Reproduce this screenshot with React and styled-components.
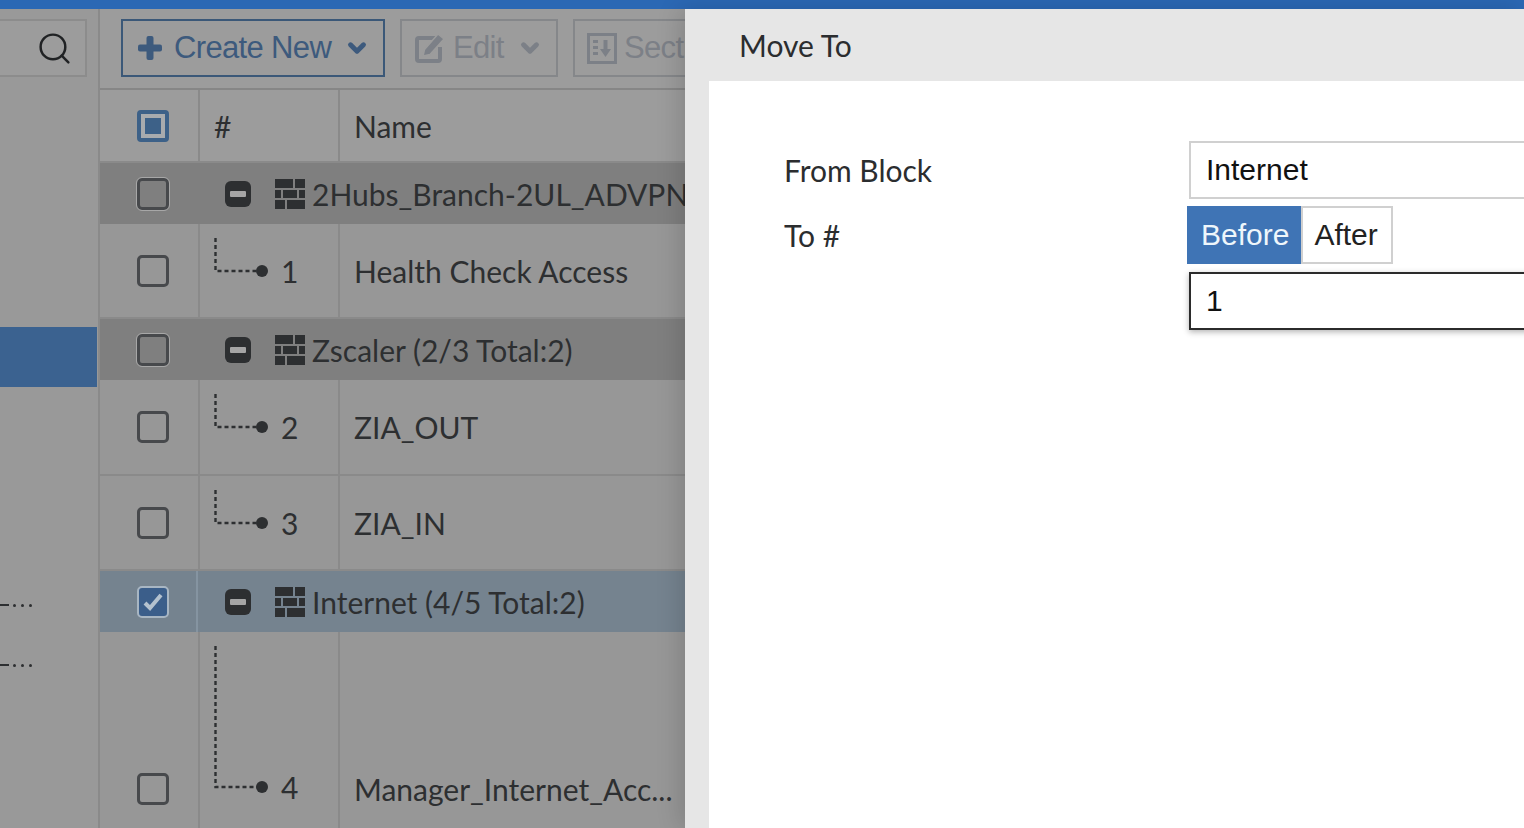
import React from "react";
import styled, { createGlobalStyle } from "styled-components";
import { ChevronDown, Search } from "lucide-react";

const rows = [
  { kind: "group", height: 61, title: "2Hubs_Branch-2UL_ADVPN" },
  { kind: "rule", height: 95, num: 1, name: "Health Check Access", line: 33 },
  { kind: "group", height: 61, title: "Zscaler (2/3 Total:2)" },
  { kind: "rule", height: 96, num: 2, name: "ZIA_OUT", line: 33 },
  { kind: "rule", height: 95, num: 3, name: "ZIA_IN", line: 33 },
  { kind: "group", height: 61, title: "Internet (4/5 Total:2)", selected: true },
  { kind: "rule", height: 316, num: 4, name: "Manager_Internet_Acc...", line: 141 },
];

export default function App() {
  return (
    <>
      <GlobalStyle />
      <Screen>
        <TopBar />
        <Body>
          <Page>
            <Sidebar>
              <SearchBox>
                <Search size={37} strokeWidth={1.6} color="#202224" />
              </SearchBox>
              <ActiveItem />
              <TruncatedItem $gap={216}><Dash /><Dot /><Dot /><Dot /></TruncatedItem>
              <TruncatedItem $gap={56}><Dash /><Dot /><Dot /><Dot /></TruncatedItem>
            </Sidebar>

            <Content>
              <Toolbar>
                <ToolButton $primary $width={264}>
                  <PlusIcon />
                  <span>Create New</span>
                  <ChevronDown size={26} strokeWidth={4.5} />
                </ToolButton>
                <ToolButton $width={158} $inset={12} $iconShift={-4}>
                  <EditIcon />
                  <span>Edit</span>
                  <ChevronDown size={26} strokeWidth={4.5} />
                </ToolButton>
                <ToolButton $width={180} $inset={12} $iconShift={-4}>
                  <SectionIcon />
                  <span>Section</span>
                </ToolButton>
              </Toolbar>

              <HeadRow $height={75}>
                <CheckCell>
                  <PartialBox><i /></PartialBox>
                </CheckCell>
                <NumHead>#</NumHead>
                <NameHead>Name</NameHead>
              </HeadRow>

              {rows.map(( row, index ) => (
                row.kind === "group"
                  ? <GroupLine key={index} row={row} />
                  : <RuleLine key={index} row={row} />
              ))}
            </Content>
          </Page>

          <Panel>
            <PanelTitle>Move To</PanelTitle>
            <PanelBody>
              <FormRow>
                <FormLabel>From Block</FormLabel>
                <SelectBox>Internet</SelectBox>
              </FormRow>
              <ToRow>
                <ToLabel>To #</ToLabel>
                <ToFields>
                  <Switcher>
                    <SwitchButton $active>Before</SwitchButton>
                    <SwitchButton>After</SwitchButton>
                  </Switcher>
                  <NumberBox>1</NumberBox>
                </ToFields>
              </ToRow>
            </PanelBody>
          </Panel>
        </Body>
      </Screen>
    </>
  );
}

const GroupLine = ( { row } ) => (
  <GroupRow $selected={row.selected} $height={row.height}>
    <CheckCell $group $selected={row.selected}>
      <CheckBox $group $checked={row.selected}>
        {row.selected && <CheckIcon />}
      </CheckBox>
    </CheckCell>
    <GroupTitle>
      <MinusIcon />
      <BrickIcon />
      <span>{row.title}</span>
    </GroupTitle>
  </GroupRow>
);

const RuleLine = ( { row } ) => (
  <RuleRow $height={row.height}>
    <CheckCell>
      <CheckBox />
    </CheckCell>
    <TreeCell>
      <Tree>
        <TreeIcon height={row.line} />
        <RuleNum>{row.num}</RuleNum>
      </Tree>
    </TreeCell>
    <NameCell>{row.name}</NameCell>
  </RuleRow>
);

const PlusIcon = () => (
  <svg width="26" height="26" viewBox="0 0 26 26" fill="currentColor">
    <rect x="9.5" y="1" width="7" height="24" rx="2" />
    <rect x="1" y="9.5" width="24" height="7" rx="2" />
  </svg>
);

const EditIcon = () => (
  <svg width="32" height="32" viewBox="0 0 32 32">
    <path d="M22 6H5a2 2 0 0 0-2 2v19a2 2 0 0 0 2 2h19a2 2 0 0 0 2-2V15" fill="none" stroke="currentColor" strokeWidth="4" />
    <path d="M9 24l1.500-6.500L24 2l6 5-14 15.500z" fill="currentColor" stroke="#9c9c9c" strokeWidth="1.500" />
  </svg>
);

const SectionIcon = () => (
  <svg width="30" height="31" viewBox="0 0 30 31" fill="currentColor">
    <path d="M0 0h30v31H0zM3 3v25h24V3z" fillRule="evenodd" />
    <path d="M6 7h5v3H6zM6 13h5v3H6zM6 19h5v3H6zM16.500 7h4v9H24l-5.500 8-5.500-8h3.500z" />
  </svg>
);

const MinusIcon = () => (
  <svg width="26" height="26" viewBox="0 0 26 26">
    <rect width="26" height="26" rx="6" fill="#2d2f31" />
    <rect x="5" y="10" width="16" height="6" rx="1" fill="#a5a5a5" />
  </svg>
);

const BrickIcon = () => (
  <svg width="30" height="30" viewBox="0 0 30 30" fill="#2d2f31">
    <path d="M0 0h18v9H0zM20 0h10v9H20zM0 11h6v8H0zM8 11h14v8H8zM24 11h6v8h-6zM0 21h10v9H0zM12 21h18v9H12z" />
  </svg>
);

const CheckIcon = () => (
  <svg width="22" height="20" viewBox="0 0 22 20" fill="none">
    <path d="M3 11l5 5L19 3" stroke="#b4c2cf" strokeWidth="4" />
  </svg>
);

// dotted elbow from the parent row down to the rule number
const TreeIcon = ( { height } ) => (
  <TreeSvg width="55" height={height + 7} viewBox={`0 0 55 ${height + 7}`}>
    <path d={`M1.500 0V${height}H44`} fill="none" stroke="#2d2f31" strokeWidth="2.4" strokeDasharray="4 3" />
    <circle cx="48" cy={height} r="6" fill="#2d2f31" />
  </TreeSvg>
);

const GlobalStyle = createGlobalStyle`
  html, body {
    margin: 0;
    padding: 0;
    background: #979797;
  }

  * {
    box-sizing: border-box;
  }
`;

const Screen = styled.div`
  width: 1524px;
  height: 828px;
  display: flex;
  flex-direction: column;
  overflow: hidden;
  font-family: Lato, "Liberation Sans", sans-serif;
`;

const TopBar = styled.div`
  flex: 0 0 9px;
  background: #2b68b4;
`;

const Body = styled.div`
  flex: 1;
  display: flex;
  min-height: 0;
`;

const Page = styled.div`
  flex: 0 0 685px;
  display: flex;
  overflow: hidden;
  background: #979797;
`;

const Sidebar = styled.div`
  flex: 0 0 98px;
  display: flex;
  flex-direction: column;
  background: #999;
`;

const SearchBox = styled.div`
  height: 58px;
  margin: 10px 11px 0 0;
  display: flex;
  align-items: center;
  justify-content: flex-end;
  padding-right: 12px;
  background: #9c9c9c;
  border: 2px solid #8c8c8c;
  border-left: 0;
`;

const ActiveItem = styled.div`
  height: 60px;
  margin-top: 250px;
  margin-right: 1px;
  background: #3b6290;
`;

const TruncatedItem = styled.div`
  display: flex;
  align-items: center;
  gap: 4px;
  height: 4px;
  margin-top: ${( p ) => p.$gap}px;
`;

const Dash = styled.span`
  width: 9px;
  height: 2px;
  background: #2d2f31;
`;

const Dot = styled.span`
  width: 3px;
  height: 3px;
  margin-right: 1px;
  border-radius: 50%;
  background: #2d2f31;
`;

const Content = styled.div`
  flex: 1;
  min-width: 0;
  display: flex;
  flex-direction: column;
  border-left: 2px solid #8a8a8a;
`;

const Toolbar = styled.div`
  flex: 0 0 79px;
  display: flex;
  gap: 15px;
  padding: 10px 0 0 21px;
  background: #9c9c9c;
`;

const ToolButton = styled.div`
  flex: 0 0 ${( p ) => p.$width}px;
  height: 58px;
  display: flex;
  align-items: center;
  gap: 11px;
  padding-left: ${( p ) => p.$inset || 14}px;
  font-family: "Liberation Sans", Arial, sans-serif;
  font-size: 31px;
  letter-spacing: -0.65px;
  color: ${( p ) => p.$primary ? "#3d5a7d" : "#7c8087"};
  border: 2px solid ${( p ) => p.$primary ? "#3b5878" : "#85878a"};

  svg:first-child {
    margin-right: ${( p ) => p.$iconShift || 0}px;
  }

  span + svg {
    margin-left: 2px;
  }
`;

const Row = styled.div`
  flex: 0 0 ${( p ) => p.$height}px;
  display: flex;
`;

const HeadRow = styled(Row)`
  background: #9c9c9c;
  border-top: 2px solid #868686;
  border-bottom: 2px solid #8a8a8a;
`;

const GroupRow = styled(Row)`
  background: ${( p ) => p.$selected ? "#75838f" : "#7f7f7f"};
`;

const RuleRow = styled(Row)`
  background: #979797;
  border-bottom: 2px solid #8a8a8a;
`;

const CheckCell = styled.div`
  flex: 0 0 ${( p ) => p.$group ? 98 : 100}px;
  display: flex;
  align-items: center;
  justify-content: center;
  padding-left: ${( p ) => p.$group ? 10 : 8}px;
  background: ${( p ) => p.$selected ? "#75838f" : "transparent"};
  border-right: 2px solid ${( p ) => p.$selected ? "#8594a1" : p.$group ? "transparent" : "#8a8a8a"};
`;

const NumHead = styled.div`
  flex: 0 0 140px;
  display: flex;
  align-items: center;
  padding-left: 14px;
  font-size: 30px;
  color: #2d2f31;
  border-right: 2px solid #8a8a8a;
`;

const NameHead = styled.div`
  flex: 1;
  display: flex;
  align-items: center;
  padding-left: 14px;
  font-size: 30px;
  color: #2d2f31;
`;

const CheckBox = styled.div`
  width: 32px;
  height: 32px;
  display: flex;
  align-items: center;
  justify-content: center;
  border-radius: 5px;
  background: ${( p ) => p.$checked ? "#3b5e8a" : "transparent"};
  border: ${( p ) => p.$checked ? "2px solid #a8b6c3" : "3.5px solid #47494c"};
  ${( p ) => p.$group && !p.$checked && "outline: 1px solid #a7a7a7;"}
`;

const PartialBox = styled.div`
  width: 32px;
  height: 32px;
  display: flex;
  align-items: center;
  justify-content: center;
  border-radius: 4px;
  border: 4px solid #3d6188;
  background: #a8abae;

  i {
    display: block;
    width: 16px;
    height: 16px;
    background: #3d6188;
  }
`;

const GroupTitle = styled.div`
  flex: 1;
  display: flex;
  align-items: center;
  gap: 10px;
  padding-left: 27px;
  min-width: 0;
  white-space: nowrap;
  font-size: 30px;
  color: #2d2f31;

  svg {
    flex: none;
  }

  svg:nth-child(2) {
    margin-left: 14px;
    margin-right: -3px;
  }
`;

const TreeCell = styled.div`
  flex: 0 0 140px;
  padding: 14px 0 0 14px;
  border-right: 2px solid #8a8a8a;
`;

const Tree = styled.div`
  display: flex;
  align-items: flex-end;
`;

const TreeSvg = styled.svg`
  flex: none;
`;

const RuleNum = styled.div`
  margin-left: 12px;
  margin-bottom: -11px;
  line-height: 36px;
  font-size: 30px;
  color: #2d2f31;
`;

const NameCell = styled.div`
  flex: 1;
  min-width: 0;
  display: flex;
  align-items: center;
  padding-left: 14px;
  white-space: nowrap;
  font-size: 30px;
  color: #2d2f31;
`;

const Panel = styled.div`
  flex: 1;
  min-width: 0;
  position: relative;
  display: flex;
  flex-direction: column;
  background: #e6e6e6;
  box-shadow: -6px 0 22px rgba(0, 0, 0, 0.14);
`;

const PanelTitle = styled.div`
  flex: 0 0 72px;
  display: flex;
  align-items: center;
  padding-left: 54px;
  font-size: 30px;
  color: #2b2d2f;
`;

const PanelBody = styled.div`
  flex: 1;
  margin-left: 24px;
  padding: 60px 0 0 75px;
  background: #fff;
  overflow: hidden;
`;

const FormRow = styled.div`
  display: flex;
  align-items: center;
`;

const FormLabel = styled.div`
  flex: 0 0 405px;
  font-size: 30px;
  color: #2b2d2f;
`;

const SelectBox = styled.div`
  flex: 0 0 500px;
  height: 58px;
  display: flex;
  align-items: center;
  padding-left: 15px;
  font-family: "Liberation Sans", Arial, sans-serif;
  font-size: 30px;
  color: #111;
  border: 2px solid #d0d0d0;
`;

const ToRow = styled.div`
  display: flex;
  align-items: flex-start;
  margin-top: 7px;
`;

const ToLabel = styled(FormLabel)`
  flex-basis: 403px;
  line-height: 58px;
`;

const ToFields = styled.div`
  flex: 0 0 500px;
  display: flex;
  flex-direction: column;
  gap: 8px;
`;

const Switcher = styled.div`
  display: flex;
`;

const SwitchButton = styled.div`
  height: 58px;
  display: flex;
  align-items: center;
  padding: 0 ${( p ) => p.$active ? "10px 0 12px" : "13px 0 11px"};
  font-family: "Liberation Sans", Arial, sans-serif;
  font-size: 30px;
  color: ${( p ) => p.$active ? "#eef6fb" : "#222"};
  background: ${( p ) => p.$active ? "#3f74b5" : "#fff"};
  border: 2px solid ${( p ) => p.$active ? "#3f74b5" : "#d0d0d0"};
`;

const NumberBox = styled.div`
  height: 58px;
  margin-left: 2px;
  display: flex;
  align-items: center;
  padding-left: 15px;
  font-family: "Liberation Sans", Arial, sans-serif;
  font-size: 30px;
  color: #111;
  background: #fff;
  border: 2px solid #2b2b2b;
  box-shadow: 0 2px 6px rgba(0, 0, 0, 0.3);
`;
